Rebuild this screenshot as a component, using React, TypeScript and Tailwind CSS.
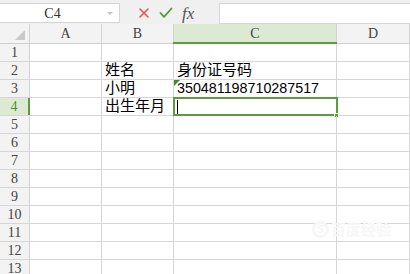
import React from "react";

const cols = [
  { w: 72, label: "A" },
  { w: 72, label: "B" },
  { w: 163, label: "C" },
  { w: 73, label: "D" },
];

const data: Record<number, string[]> = {
  2: ["", "姓名", "身份证号码", ""],
  3: ["", "小明", "350481198710287517", ""],
  4: ["", "出生年月", "", ""],
};

const hdr = { fontFamily: '"Liberation Serif", "DejaVu Serif", serif' };
const cjk = { fontFamily: '"Liberation Sans", "Noto Sans CJK SC", sans-serif' };

export default function App() {
  const rows = Array.from({ length: 13 }, (_, i) => i + 1);
  return (
    <div className="relative w-[410px] h-[274px] overflow-hidden bg-white">
      {/* toolbar */}
      <div className="flex h-[24px] bg-[#f0f0f0] pt-[3px] pb-[1px]">
        <div className="flex w-[120px] h-[20px] bg-white border border-[#d6d6d6] border-l-0 items-center">
          <div className="flex-1 text-center text-[14px] text-[#333] pl-[2px]" style={hdr}>C4</div>
          <svg width="14" height="10" viewBox="0 0 14 10" className="mr-[2px]">
            <path d="M4 4 L7 7 L10 4 Z" fill="#c8c8c8" />
          </svg>
        </div>
        <div className="flex w-[99px] items-center">
          <svg width="12" height="12" viewBox="0 0 12 12" className="ml-[18px]">
            <path d="M2 2 L10 10 M10 2 L2 10" stroke="#e0574f" strokeWidth="1.6" strokeLinecap="round" />
          </svg>
          <svg width="14" height="12" viewBox="0 0 14 12" className="ml-[9px]">
            <path d="M1.5 6 L5 9.8 L12.5 1.5" stroke="#4e9a3e" strokeWidth="1.8" fill="none" strokeLinecap="round" strokeLinejoin="round" />
          </svg>
          <span className="ml-[9px] text-[17px] italic text-[#555] leading-none" style={{ fontFamily: '"Liberation Serif", serif' }}>fx</span>
        </div>
        <div className="flex-1 h-[21px] bg-white border border-[#d6d6d6] border-r-0" />
      </div>

      {/* column header row */}
      <div className="flex h-[20px] bg-[#f3f3f3] border-b border-[#cfcfcf]">
        <div className="relative w-[30px] border-r border-[#d2d2d2] h-full">
          <svg width="10" height="10" viewBox="0 0 10 10" className="absolute right-[4px] bottom-[3px]">
            <path d="M10 0 L10 10 L0 10 Z" fill="#c9c9c9" />
          </svg>
        </div>
        {cols.map((c) => {
          const sel = c.label === "C";
          return (
            <div
              key={c.label}
              className={
                sel
                  ? "relative flex items-center justify-center h-full bg-[#dcead4] border-r border-[#d2d2d2] text-[#444] text-[14px]"
                  : "flex items-center justify-center h-full border-r border-[#d2d2d2] text-[#444] text-[14px]"
              }
              style={{ width: c.w, ...hdr }}
            >
              {c.label}
              {sel && <div className="absolute left-[-1px] right-[-1px] bottom-[-1px] h-[2px] bg-[#5d9b3f]" />}
            </div>
          );
        })}
      </div>

      {/* rows */}
      {rows.map((r) => {
        const selRow = r === 4;
        const vals = data[r] || ["", "", "", ""];
        return (
          <div key={r} className="flex h-[18px] border-b border-[#d6d6d6]">
            <div
              className={
                selRow
                  ? "relative flex items-center justify-center w-[30px] h-full bg-[#dcead4] text-[#4f8f35] text-[14px] border-r-2 border-[#5d9b3f]"
                  : "flex items-center justify-center w-[30px] h-full bg-[#f3f3f3] text-[#444] text-[14px] border-r border-[#d2d2d2]"
              }
              style={hdr}
            >
              {r}
            </div>
            {cols.map((c, ci) => {
              const v = vals[ci];
              const isC3 = r === 3 && ci === 2;
              const isC4 = r === 4 && ci === 2;
              const isNum = isC3;
              return (
                <div
                  key={c.label}
                  className="relative flex items-end h-full border-r border-[#d6d6d6] pl-[3px] text-black whitespace-nowrap overflow-visible"
                  style={{ width: c.w }}
                >
                  {v && (
                    <span
                      className={isNum ? "text-[14.3px] leading-[17px]" : "text-[15px] leading-[18px]"}
                      style={isNum ? { fontFamily: '"Liberation Sans", Arial, sans-serif' } : cjk}
                    >
                      {v}
                    </span>
                  )}
                  {isC3 && (
                    <svg width="6" height="6" viewBox="0 0 6 6" className="absolute left-0 top-0">
                      <path d="M0 0 L6 0 L0 6 Z" fill="#3f8a2b" />
                    </svg>
                  )}
                  {isC4 && (
                    <>
                      <div className="absolute left-[-1px] top-[-1px] right-[-2px] bottom-[-1px] border-2 border-[#5d9b3f]" />
                      <div className="absolute left-[3px] top-[2px] w-[1px] h-[14px] bg-black" />
                      <div className="absolute right-[-3px] bottom-[-3px] w-[5px] h-[5px] bg-[#5d9b3f] border border-white" />
                    </>
                  )}
                </div>
              );
            })}
          </div>
        );
      })}

      {/* watermark */}
      <div className="absolute left-[312px] top-[221px] flex items-center gap-[2px] pointer-events-none">
        <div className="w-[17px] h-[17px] rounded-full border-[3px] border-[#f6f6f6] flex items-center justify-center text-[11px] font-bold text-[#f6f6f6]" style={cjk}>S</div>
        <span className="text-[15px] font-bold text-[#f7f7f7] leading-none" style={cjk}>百度经验</span>
      </div>
    </div>
  );
}
